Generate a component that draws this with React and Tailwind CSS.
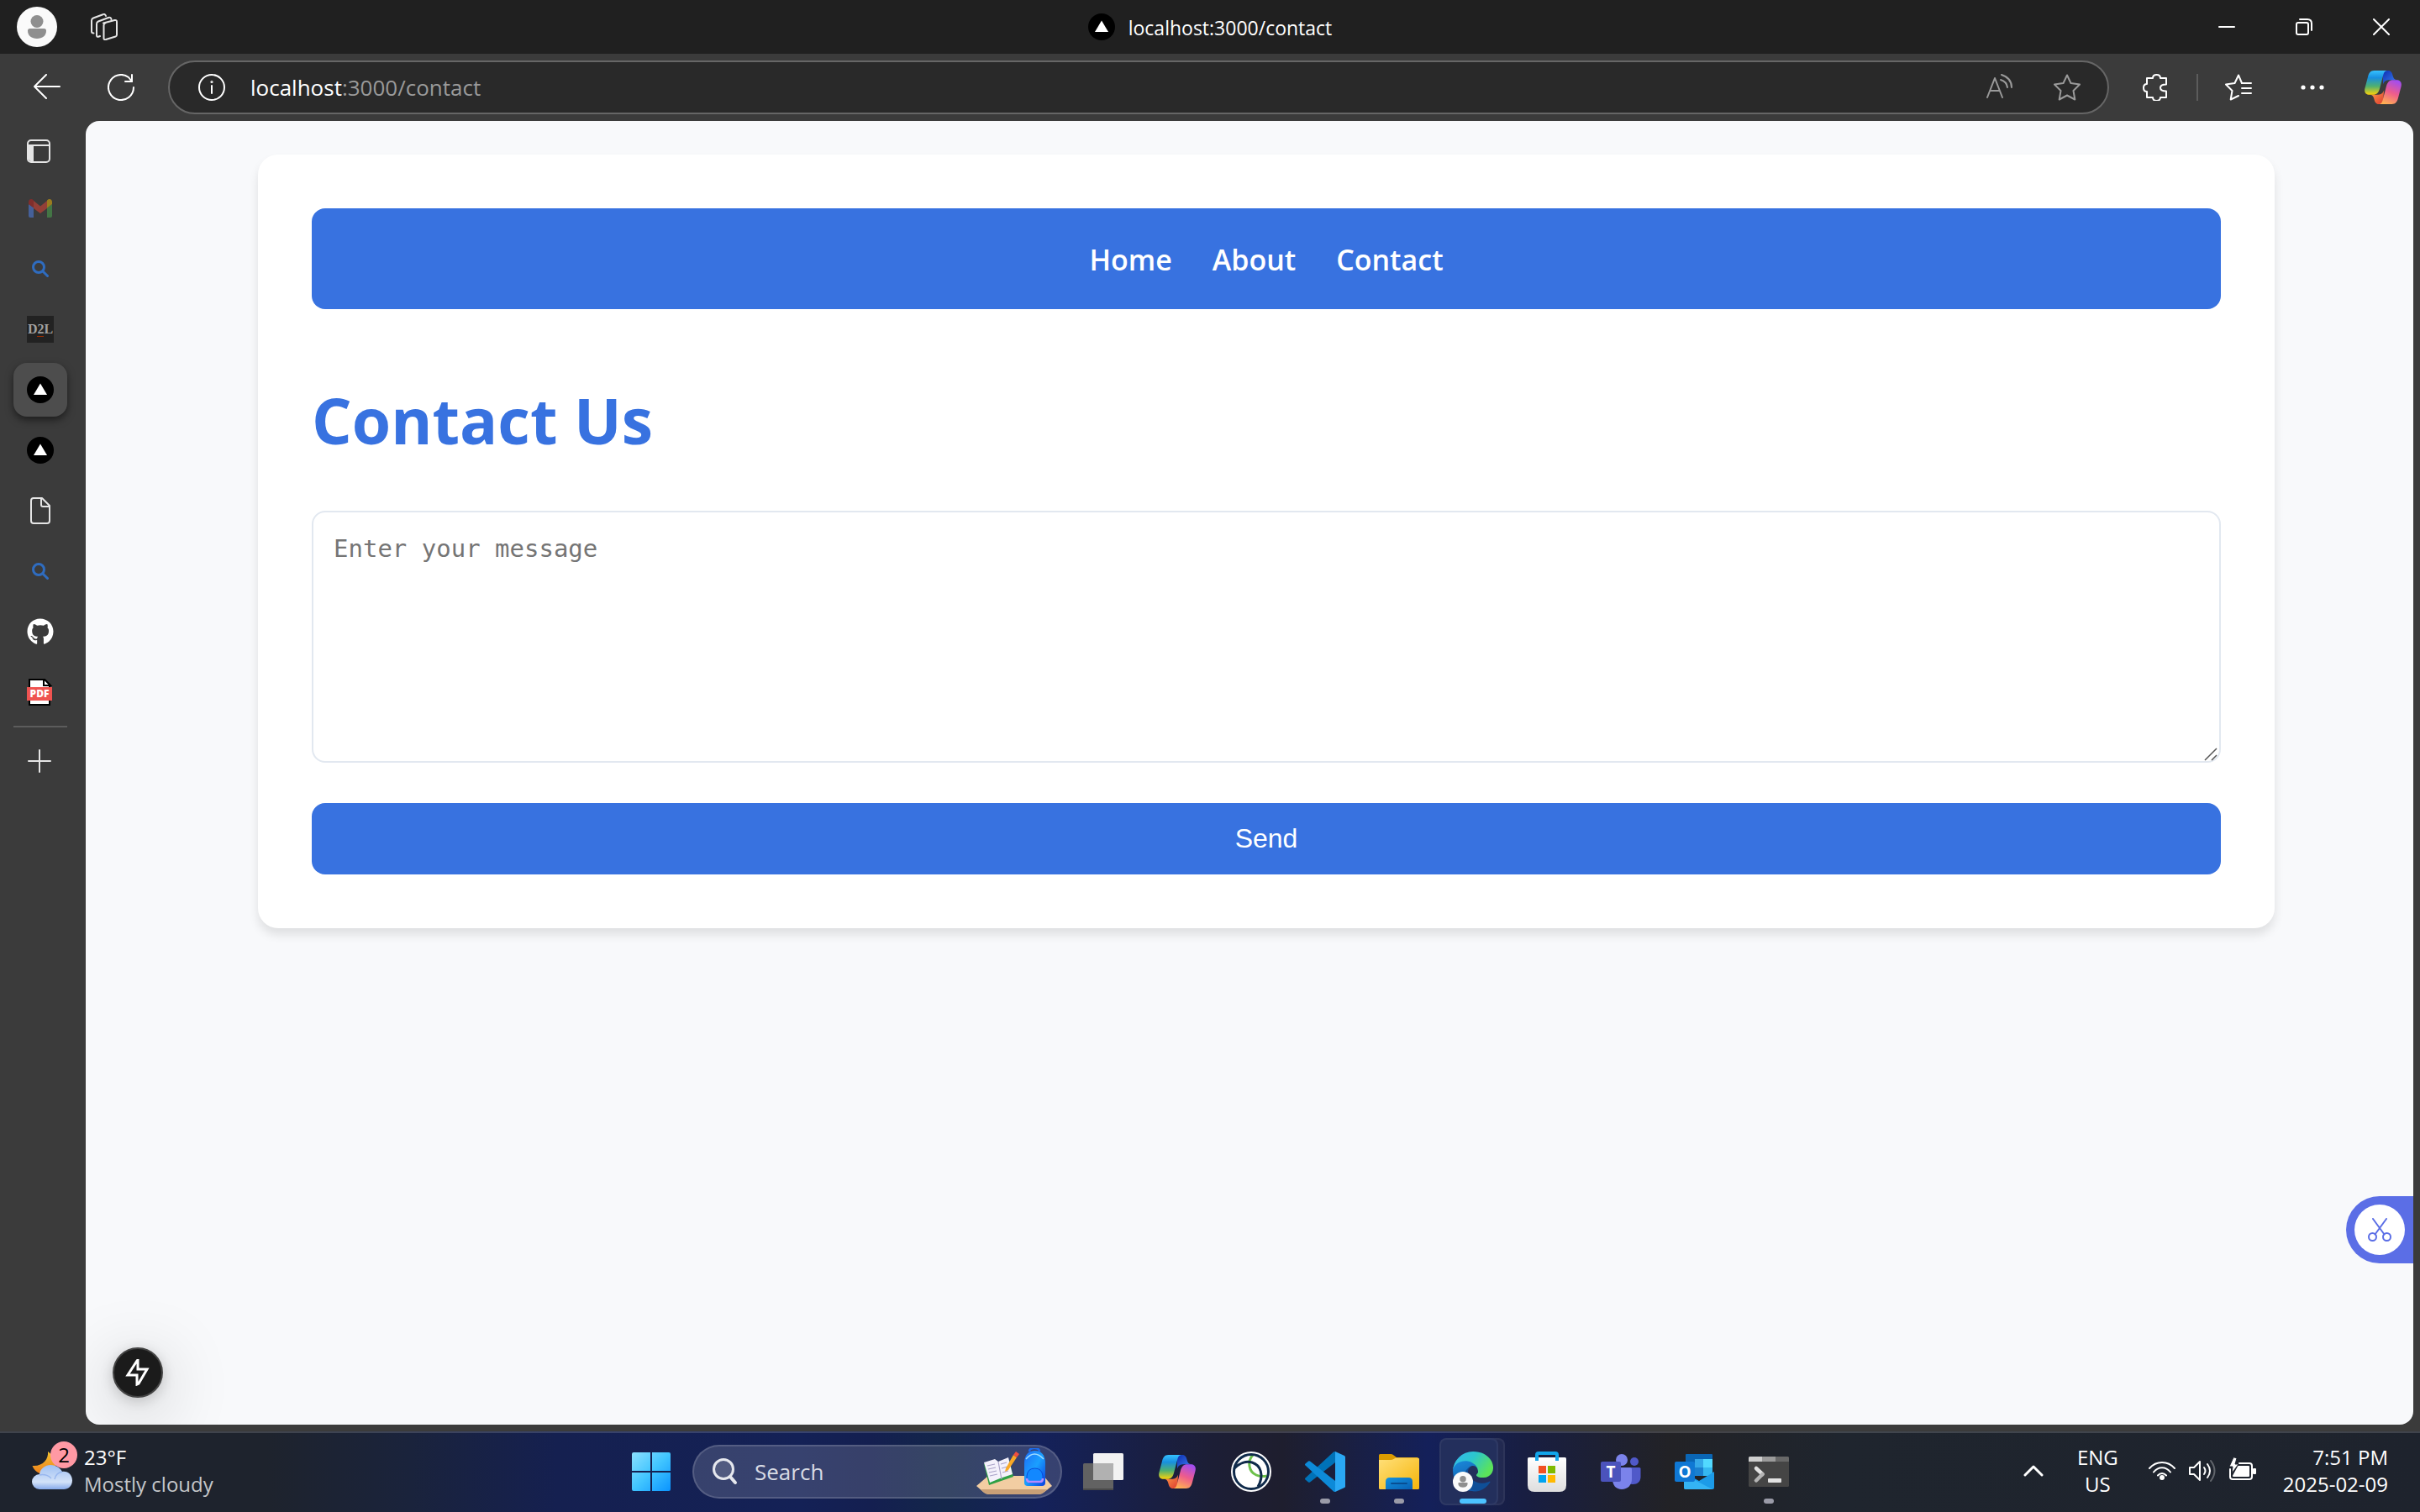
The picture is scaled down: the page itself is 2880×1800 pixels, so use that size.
import React from "react";
import { FaGithub } from "react-icons/fa";

/* ---------- title bar and toolbar icons ---------- */

function Line({ size = 32, w = 2, className = "", children }) {
  return (
    <svg
      width={size}
      height={size}
      viewBox={`0 0 ${size} ${size}`}
      fill="none"
      stroke="currentColor"
      strokeWidth={w}
      strokeLinecap="round"
      strokeLinejoin="round"
      aria-hidden="true"
      className={"shrink-0 " + className}
    >
      {children}
    </svg>
  );
}

const Profile = () => (
  <svg width="48" height="48" viewBox="0 0 48 48" aria-hidden="true">
    <circle cx="24" cy="24" r="24" fill="#fafafa" />
    <circle cx="24" cy="17.500" r="7.500" fill="#8f8f8f" />
    <path d="M15.500 26h17q2.500 0 2.500 2.500C35 34.500 30.500 38 24 38s-11-3.500-11-9.500q0-2.500 2.500-2.500z" fill="#8f8f8f" />
  </svg>
);

const Workspaces = () => (
  <Line className="text-neutral-200">
    <path d="M15 11.500 28.500 8Q31 7.500 31 10v15.500q0 1.500-1.500 2L18 31q-2.500.7-2.500-1.500V14q0-2 2-2.700" />
    <path d="M24.500 7Q24 4 21 5L9 9.500Q7 10.300 7 12.500V26q0 2 2 1.800l2-.8" />
    <path d="M18 3Q17 0 14.500 1.200L3 5.500Q1 6.300 1 8.500v13q0 2 2.500 2" />
  </Line>
);

function Triangle() {
  return (
    <svg width="32" height="32" viewBox="0 0 32 32" aria-hidden="true" className="shrink-0">
      <circle cx="16" cy="16" r="16" fill="#000" />
      <path d="M16 8.500 24 22H8z" fill="#fff" />
    </svg>
  );
}

function CopilotLogo({ id }) {
  return (
    <svg width="44" height="40" viewBox="0 0 44 40" aria-hidden="true" className="shrink-0">
      <defs>
        <linearGradient id={id + "a"} x1="0" y1="0" x2="0" y2="1">
          <stop offset="0" stopColor="#35c1ff" />
          <stop offset=".3" stopColor="#188fdf" />
          <stop offset=".65" stopColor="#4fb070" />
          <stop offset="1" stopColor="#fbd209" />
        </linearGradient>
        <linearGradient id={id + "b"} x1="0" y1="0" x2="1" y2="1">
          <stop offset="0" stopColor="#0f2fb0" />
          <stop offset="1" stopColor="#3b82f6" />
        </linearGradient>
        <linearGradient id={id + "c"} x1=".7" y1="0" x2=".3" y2="1">
          <stop offset="0" stopColor="#a24df0" />
          <stop offset=".5" stopColor="#ee5c8c" />
          <stop offset="1" stopColor="#ffb152" />
        </linearGradient>
        <linearGradient id={id + "d"} x1="0" y1="0" x2="1" y2="1">
          <stop offset="0" stopColor="#ffa34a" />
          <stop offset="1" stopColor="#dd3a30" />
        </linearGradient>
      </defs>
      <path d="M22 0h6c3.500 0 4.700 2.500 5.600 6 .8 3 2 5.200 5.400 5.200h-9c-4 0-6.500 1-8 5z" fill={`url(#${id}b)`} />
      <path d="M22 40h-5c-3.500 0-4.700-2.500-5.600-6-.8-3-2-5.200-5.400-5.200h9c4 0 6.500-1 8-5z" fill={`url(#${id}d)`} />
      <path d="M11.500 0H27c-2.700 0-4 2.300-4.800 5.500L18 21.500c-1.300 4.800-3.600 7.300-8 7.300H6c-4.500 0-6.800-3-5.500-8L4 7.500C5.200 2.700 7.200 0 11.500 0z" fill={`url(#${id}a)`} />
      <path d="M32.500 40H17c2.700 0 4-2.300 4.800-5.500L26 18.500c1.300-4.800 3.600-7.300 8-7.300h4c4.500 0 6.800 3 5.500 8L40 32.500c-1.200 4.800-3.200 7.500-7.500 7.500z" fill={`url(#${id}c)`} />
    </svg>
  );
}

/* ---------- vertical tab icons ---------- */

const TabActions = () => (
  <Line size={28} className="text-neutral-200">
    <path d="M2 8H8V26H5Q2 26 2 23z" fill="currentColor" stroke="none" />
    <rect x="1" y="1" width="26" height="26" rx="4" />
    <path d="M1 7h26" />
    <path d="M7 7v20" />
  </Line>
);

const Gmail = () => (
  <svg width="28" height="22" viewBox="0 0 28 22" aria-hidden="true" className="opacity-50">
    <path d="M0 6v14q0 2 2 2h4V10z" fill="#4f86f7" />
    <path d="M28 6v14q0 2-2 2h-4V10z" fill="#4caf50" />
    <path d="M6 2l8 6.500L22 2v9l-8 6-8-6z" fill="#ea4335" />
    <path d="M0 3.500C0 0 3.500-1 6 1.500v9L0 6z" fill="#c5221f" />
    <path d="M28 3.500C28 0 24.500-1 22 1.500v9L28 6z" fill="#fbbc04" />
  </svg>
);

const BlueSearch = () => (
  <Line size={20} w={3} className="text-[#2f6cbf]">
    <circle cx="8" cy="8" r="6.500" />
    <path d="M13 13l5.500 5.500" />
  </Line>
);

const D2L = () => (
  <span className="flex size-8 items-center justify-center bg-[#222] font-['Liberation_Serif',serif] text-base font-bold text-neutral-400">
    D<span className="border-b border-orange-800 leading-4">2</span>L
  </span>
);

const PageIcon = () => (
  <Line size={32} className="text-neutral-200">
    <path d="M7 1h11l9 9v18q0 3-3 3H8q-3 0-3-3V4q0-3 3-3" />
    <path d="M17 1v8q0 2 2 2h8" />
  </Line>
);

const Pdf = () => (
  <svg width="32" height="32" viewBox="0 0 32 32" aria-hidden="true">
    <path d="M3 1h18l6 6v24H3z" fill="#fff" stroke="#000" strokeWidth="2" />
    <path d="M20 0v8h8z" fill="#fff" stroke="#000" strokeWidth="2" />
    <path d="M0 10h30v16H0z" fill="#ef5350" />
    <text x="15" y="22" textAnchor="middle" fontSize="12" fontWeight="800" fill="#fff" fontFamily="Open Sans, sans-serif">
      PDF
    </text>
  </svg>
);

/* ---------- taskbar icons ---------- */

const Weather = () => (
  <svg width="48" height="46" viewBox="0 0 48 46" aria-hidden="true">
    <defs>
      <linearGradient id="moon" x1="0" y1="0" x2="0" y2="1">
        <stop offset="0" stopColor="#f2c230" />
        <stop offset="1" stopColor="#ee7d1a" />
      </linearGradient>
      <linearGradient id="cloud" x1="0" y1="0" x2="0" y2="1">
        <stop offset="0" stopColor="#9fc0f3" />
        <stop offset=".7" stopColor="#d3e2f8" />
        <stop offset="1" stopColor="#86a9ea" />
      </linearGradient>
    </defs>
    <path d="M19 0c1 9-6 18-18.500 17C3 24 12 30 22 26c7-3 8-14 4-20z" fill="url(#moon)" />
    <path d="M9 45a9 9 0 010-18c1-7 7-11 13-11 7 0 12 4 14 8 7-1 12 4 12 10.500S43 45 38 45z" fill="url(#cloud)" />
    <path d="M9 28c5-1 10 0 14 4M27 33c1-5 4-8 9-9" fill="none" stroke="#7ea3ea" strokeWidth="1.500" opacity=".6" />
  </svg>
);

const Windows = () => (
  <svg width="46" height="46" viewBox="0 0 46 46" aria-hidden="true">
    <defs>
      <linearGradient id="win" x1="0" y1="0" x2="1" y2="1">
        <stop offset="0" stopColor="#8be0ff" />
        <stop offset=".5" stopColor="#41c5ff" />
        <stop offset="1" stopColor="#0a94ff" />
      </linearGradient>
    </defs>
    <path d="M2 0h20v22H0V2q0-2 2-2zM24 0h20q2 0 2 2v20H24zM0 24h22v22H2q-2 0-2-2zM24 24h22v20q0 2-2 2H24z" fill="url(#win)" />
  </svg>
);

const SearchGlyph = () => (
  <svg width="30" height="32" viewBox="0 0 30 32" fill="none" aria-hidden="true" className="shrink-0">
    <circle cx="13" cy="13" r="11.500" stroke="#e6e8ee" strokeWidth="3" fill="#ffffff22" />
    <path d="M21 22l6 7" stroke="#e6e8ee" strokeWidth="4" strokeLinecap="round" />
  </svg>
);

const StudyArt = () => (
  <svg width="90" height="56" viewBox="0 0 90 56" aria-hidden="true" className="shrink-0">
    <defs>
      <linearGradient id="bag" x1="0" y1="0" x2="1" y2="1">
        <stop offset="0" stopColor="#1e6cf5" />
        <stop offset=".5" stopColor="#1aa0ff" />
        <stop offset="1" stopColor="#0a3fe0" />
      </linearGradient>
    </defs>
    <path d="M14 33h66l10 12-9 7q-3 3-8 3H16q-5 0-8-3l-8-7z" fill="#f2cda2" />
    <path d="M5 49h80l-4 3q-3 3-8 3H16q-5 0-8-3z" fill="#c9a077" />
    <path d="M9 19l30-5 5 20-29 10z" fill="#2fa045" />
    <path d="M9 17l13-4 4 3 12-5 5 20-12 4-3 1-12 5z" fill="#f4f1fb" />
    <path d="M26 16l4 21M13 21l9-2M14 25l9-2M15 29l9-2M16 33l9-2M29 19l7-2M30 24l7-2M31 29l7-2" stroke="#aaa3c8" strokeWidth="1.200" fill="none" />
    <path d="M35 24l-1 4 4-2L48 11l-4-3z" fill="#f9a825" />
    <path d="M44 8l3-4 4 3-3 4z" fill="#f04f3e" />
    <path d="M63 4q0-4 6-4t6 4" stroke="#1a6cf0" strokeWidth="2.500" fill="none" />
    <path d="M57 18C57 8 62 3 69.500 3S82 8 82 18v23q0 4-4 4H61q-4 0-4-4z" fill="url(#bag)" />
    <path d="M59 13q10-12 21 0" stroke="#9fdcff" strokeWidth="1.500" fill="none" />
    <path d="M60 33q1-9 9.500-9T79 33v5q0 3-3 3H63q-3 0-3-3z" fill="#1288ff" stroke="#0a49d8" strokeWidth="1" />
    <path d="M60 36q0 4 3 4h13q3 0 3-4" stroke="#b58bff" strokeWidth="2.500" fill="none" />
  </svg>
);

const TaskView = () => (
  <svg width="48" height="44" viewBox="0 0 48 44" aria-hidden="true">
    <rect x="12" y="0" width="36" height="32" rx="1.500" fill="#f2f2f2" />
    <rect x="0" y="12" width="36" height="32" rx="1.500" fill="#626262" />
    <path d="M12 12h24v20H12z" fill="#b1b1b1" />
    <path d="M0 42h36v1q0 1-1 1H1q-1 0-1-1z" fill="#4a4a4a" />
  </svg>
);

const Anaconda = () => (
  <svg width="48" height="48" viewBox="0 0 48 48" fill="none" aria-hidden="true">
    <circle cx="24" cy="24" r="24" fill="#fff" />
    <path d="M26 4C19 12 21 24 30 28c4 2 8 2 13 1" stroke="#6cc04a" strokeWidth="3" />
    <circle cx="24" cy="24" r="20.500" stroke="#0f2a4a" strokeWidth="3" />
    <path d="M4 20C10 14 18 11 25 13c10 3 15 15 7 29" stroke="#0f2a4a" strokeWidth="3" />
  </svg>
);

const VsCode = () => (
  <svg width="48" height="48" viewBox="0 0 48 48" aria-hidden="true">
    <path d="M34 .5Q35 0 36 0v13L6 36.500q-1 .5-2 0l-3.500-3q-1-1 0-2z" fill="#0072b8" />
    <path d="M34 47.500q1 .5 2 .5V35L6 11.500q-1-.5-2 0l-3.500 3q-1 1 0 2z" fill="#0d8ad8" />
    <path d="M36 0l11 5q1 .5 1 1.500v35q0 1-1 1.500l-11 5z" fill="#2aa8f4" />
  </svg>
);

const Folder = () => (
  <svg width="48" height="42" viewBox="0 0 48 42" aria-hidden="true">
    <defs>
      <linearGradient id="fold" x1="0" y1="0" x2="1" y2="1">
        <stop offset="0" stopColor="#ffe07a" />
        <stop offset="1" stopColor="#f6b50a" />
      </linearGradient>
      <linearGradient id="foldb" x1="0" y1="0" x2="1" y2="1">
        <stop offset="0" stopColor="#1493de" />
        <stop offset="1" stopColor="#0860b4" />
      </linearGradient>
    </defs>
    <path d="M0 1.500Q0 0 1.500 0H14q2 0 3 1l4 3h25v8H0z" fill="#dc9c00" />
    <path d="M0 7h14q2 0 3.500-1L20 4.500h26.500q1.500 0 1.500 1.500v34.500q0 1.500-1.500 1.500h-45Q0 42 0 40.500z" fill="url(#fold)" />
    <path d="M8 42v-9q0-5 5-5h22q5 0 5 5v9z" fill="url(#foldb)" />
    <path d="M15 35h18" stroke="#084e92" strokeWidth="2" strokeLinecap="round" />
  </svg>
);

const Edge = () => (
  <svg width="48" height="48" viewBox="0 0 256 256" aria-hidden="true">
    <defs>
      <linearGradient id="ea" x1="0" y1="0" x2="1" y2=".5">
        <stop offset="0" stopColor="#35b8f1" />
        <stop offset=".5" stopColor="#2cc7cd" />
        <stop offset="1" stopColor="#5be35a" />
      </linearGradient>
      <linearGradient id="eb" x1="0" y1="0" x2=".3" y2="1">
        <stop offset="0" stopColor="#1b8ee0" />
        <stop offset="1" stopColor="#1059a8" />
      </linearGradient>
    </defs>
    <path d="M231 190.500c-3.400 1.800-6.900 3.400-10.500 4.700a101 101 0 0 1-35.900 6.400c-47.300 0-88.500-32.500-88.500-74.300a31.500 31.500 0 0 1 16.400-27.300c-42.800 1.800-53.800 46.400-53.800 72.500 0 74 68.100 81.400 82.800 81.400 7.900 0 19.800-2.300 27-4.600l1.300-.4a128 128 0 0 0 66.600-52.800 4 4 0 0 0-5.400-5.600z" fill="#0f4f98" />
    <path d="M105.700 236.500a79.200 79.200 0 0 1-22.700-21.300 80.700 80.700 0 0 1 29.500-120c3.200-1.500 8.500-4.100 15.600-4a32.400 32.400 0 0 1 25.700 13 32 32 0 0 1 6.300 18.700c0-.2 24.500-79.600-80-79.600-43.900 0-80 41.600-80 78.200a130 130 0 0 0 12.100 56 128 128 0 0 0 156.400 67 75.500 75.500 0 0 1-62.800-8z" fill="url(#eb)" />
    <path d="M152.300 144c-.8 1-3.300 2.500-3.300 5.600 0 2.700 1.700 5.200 4.800 7.300 14.400 10 41.500 8.700 41.600 8.700a59.600 59.600 0 0 0 30.300-8.400 61.400 61.400 0 0 0 30.400-52.900c.3-22.300-8-37.200-11.300-43.800C223.600 20.200 177.900 0 128 0A128 128 0 0 0 0 126.200c.5-36.500 36.800-66 80-66 3.500 0 23.500.3 42 10a72.600 72.600 0 0 1 30.900 29.300c6.100 10.600 7.200 24.100 7.200 29.500 0 5.300-2.700 8.300-7.800 15z" fill="url(#ea)" />
    <circle cx="64" cy="192" r="64" fill="#fafafa" />
    <circle cx="64" cy="174" r="20" fill="#8f8f8f" />
    <path d="M40 197h48q6 0 6 6c0 16-12 25-30 25s-30-9-30-25q0-6 6-6z" fill="#8f8f8f" />
  </svg>
);

const Store = () => (
  <svg width="46" height="48" viewBox="0 0 46 48" aria-hidden="true">
    <defs>
      <linearGradient id="st" x1="0" y1="0" x2="0" y2="1">
        <stop offset="0" stopColor="#ffffff" />
        <stop offset="1" stopColor="#dedede" />
      </linearGradient>
    </defs>
    <path d="M1.500 7h43Q46 7 46 8.500V40q0 8-8 8H8q-8 0-8-8V8.500Q0 7 1.500 7z" fill="url(#st)" />
    <path d="M11 11V4q0-2 2-2h20q2 0 2 2v7" fill="none" stroke="#12a5ea" strokeWidth="4" />
    <path d="M13 17h9v9h-9z" fill="#f25022" />
    <path d="M24 17h9v9h-9z" fill="#7fba00" />
    <path d="M13 28h9v9h-9z" fill="#00a4ef" />
    <path d="M24 28h9v9h-9z" fill="#ffb900" />
  </svg>
);

const Teams = () => (
  <svg width="48" height="42" viewBox="0 0 48 42" aria-hidden="true">
    <circle cx="40" cy="9" r="5" fill="#5059c9" />
    <path d="M35 16h11q1.500 0 1.500 1.500V27c0 6-4 9-9 9-2 0-3.500-.5-3.500-.5z" fill="#5059c9" />
    <circle cx="25" cy="7" r="7" fill="#7b83eb" />
    <path d="M14 16h21q2 0 2 2v12c0 7-5 12-12 12s-11-5-11-12z" fill="#7b83eb" />
    <rect x="0" y="9" width="24" height="24" rx="2" fill="#4b53bc" />
    <text x="12" y="28" textAnchor="middle" fontSize="19" fontWeight="700" fill="#fff" fontFamily="Open Sans, sans-serif">
      T
    </text>
  </svg>
);

const Outlook = () => (
  <svg width="48" height="42" viewBox="0 0 48 42" aria-hidden="true">
    <path d="M14 0h30q1 0 1 1v24H13V1q0-1 1-1z" fill="#0a66b5" />
    <path d="M24 6h10v10H24z" fill="#35a7e8" />
    <path d="M34 6h11v10H34z" fill="#52d9ff" />
    <path d="M24 16h10v10H24z" fill="#1a80d0" />
    <path d="M34 16h11v10H34z" fill="#35b8f1" />
    <path d="M47 21v19q0 2-2 2H13q-2 0-2-2V22l18 10z" fill="#1c9be8" />
    <path d="M11 24l34 18H13q-2 0-2-2z" fill="#34b4f4" />
    <rect x="0" y="9" width="24" height="24" rx="2" fill="#0f78d4" />
    <text x="12" y="28" textAnchor="middle" fontSize="19" fontWeight="700" fill="#fff" fontFamily="Open Sans, sans-serif">
      O
    </text>
  </svg>
);

const Terminal = () => (
  <svg width="48" height="36" viewBox="0 0 48 36" aria-hidden="true">
    <rect width="48" height="36" rx="1.500" fill="#454545" />
    <path d="M0 6V1.500Q0 0 1.500 0H16v6z" fill="#cfcfcf" />
    <path d="M16 0h16v6H16z" fill="#9b9b9b" />
    <path d="M32 0h14.500Q48 0 48 1.500V6H32z" fill="#686868" />
    <path d="M9 14l7.500 7" stroke="#e2e2e2" strokeWidth="4.500" strokeLinecap="round" />
    <path d="M16.500 21L9 28.500" stroke="#b4b4b4" strokeWidth="4.500" strokeLinecap="round" />
    <rect x="23" y="26" width="16" height="5" rx="1" fill="#e2e2e2" />
  </svg>
);

const Wifi = () => (
  <Line size={32} w={2}>
    <path d="M1 13C9 3.500 23 3.500 31 13M6 17.500c5.500-7 14.500-7 20 0M11 21.500c3-3.500 7-3.500 10 0" />
    <circle cx="16" cy="24" r="2" fill="currentColor" />
  </Line>
);

const Volume = () => (
  <Line size={32} w={2}>
    <path d="M1 12h5l7-7v22l-7-7H1z" />
    <path d="M18 12q3 4 0 8M22 8q6 8 0 16" />
    <path d="M26 4q9 12 0 24" opacity=".3" />
  </Line>
);

const Battery = () => (
  <Line size={32} w={2}>
    <path d="M1 14v9q0 3 3 3h20q3 0 3-3V10q0-3-3-3H12" />
    <path d="M11 11h12v11H5z" fill="currentColor" />
    <path d="M5 0L0 11h4l-1 8 8-11H7l2-7z" fill="currentColor" stroke="#1e232d" strokeWidth="1" />
    <path d="M29 14h2v5h-2z" fill="currentColor" />
  </Line>
);

/* ---------- page parts ---------- */

const TABS = [
  { label: "Gmail", icon: <Gmail /> },
  { label: "Search results", icon: <BlueSearch /> },
  { label: "D2L", icon: <D2L /> },
  { label: "localhost contact", icon: <Triangle />, active: true },
  { label: "localhost", icon: <Triangle /> },
  { label: "Document", icon: <PageIcon /> },
  { label: "Search", icon: <BlueSearch /> },
  { label: "GitHub", icon: <FaGithub className="size-8 text-white" /> },
  { label: "PDF", icon: <Pdf /> },
];

const APPS = [
  { label: "Task view", icon: <TaskView /> },
  { label: "Copilot", icon: <CopilotLogo id="cpt" /> },
  { label: "Anaconda", icon: <Anaconda /> },
  { label: "Visual Studio Code", icon: <VsCode />, open: true },
  { label: "File Explorer", icon: <Folder />, open: true },
  { label: "Microsoft Edge", icon: <Edge />, current: true },
  { label: "Microsoft Store", icon: <Store /> },
  { label: "Teams", icon: <Teams /> },
  { label: "Outlook", icon: <Outlook /> },
  { label: "Terminal", icon: <Terminal />, open: true },
];

function TitleBar() {
  return (
    <header className="grid h-16 grid-cols-[1fr_auto_1fr] items-center bg-[#202020] text-white">
      <div className="flex items-center gap-10 pl-5">
        <button aria-label="Profile"><Profile /></button>
        <button aria-label="Workspaces"><Workspaces /></button>
      </div>
      <div className="flex items-center gap-4 text-[23px]">
        <Triangle />
        <span className="pt-0.5">localhost:3000/contact</span>
      </div>
      <div className="flex h-full justify-end">
        <button aria-label="Minimize" className="flex w-[92px] items-center justify-center">
          <Line size={20}><path d="M1 10h18" /></Line>
        </button>
        <button aria-label="Restore" className="flex w-[92px] items-center justify-center">
          <Line size={20}>
            <rect x="1" y="5" width="14" height="14" rx="2" />
            <path d="M5 1h9q5 0 5 5v8" />
          </Line>
        </button>
        <button aria-label="Close" className="flex w-[92px] items-center justify-center">
          <Line size={20}><path d="M1 1l18 18M19 1L1 19" /></Line>
        </button>
      </div>
    </header>
  );
}

function Toolbar() {
  return (
    <div className="flex h-20 items-center pl-10 pr-[22px] text-white">
      <button aria-label="Back" className="mr-14">
        <Line><path d="M31 15H1M15 1L1 15l14 14" /></Line>
      </button>
      <button aria-label="Refresh" className="mr-10">
        <Line>
          <path d="M31 16A15 15 0 1 1 25 4l4 5" />
          <path d="M29 1v8h-8" />
        </Line>
      </button>
      <div className="flex h-16 flex-1 items-center rounded-full border-2 border-[#666] bg-[#292929] pl-[34px] pr-8">
        <button aria-label="Site information">
          <Line>
            <circle cx="16" cy="16" r="15" />
            <path d="M16 14v9" />
            <circle cx="16" cy="9.500" r=".6" />
          </Line>
        </button>
        <a href="#address" className="ml-[30px] flex-1 text-[26px] text-[#9a9a9a]">
          <span className="text-white">localhost</span>:3000/contact
        </a>
        <div className="flex items-center gap-12 text-[#9a9a9a]">
          <button aria-label="Read aloud">
            <Line>
              <path d="M1 28L10 5l9 23M4.500 20h11" />
              <path d="M18 1q12 4 12 15M17 7q7 2 8 9" />
            </Line>
          </button>
          <button aria-label="Add to favorites">
            <Line><path d="M16 1.500l4.500 9.500 10.500 1.500-7.500 7.500 1.800 10.500L16 25.500 6.700 30.500 8.500 20 1 12.500 11.500 11z" /></Line>
          </button>
        </div>
      </div>
      <button aria-label="Extensions" className="ml-10 mr-8">
        <Line>
          <path d="M5 5h7q0-4 4.500-4T21 5h7v7.500q-7 0-7 4t7 4V28h-7q0 4-4.500 4T12 28H5v-7q-4 0-4-4.500T5 12z" />
        </Line>
      </button>
      <div className="h-8 w-0.5 bg-[#5c5c5c]" />
      <button aria-label="Favorites" className="ml-8 mr-14">
        <Line>
          <path d="M20 11l-4-9.500L11.500 11 1 12.500 8.500 20 6.700 30.500 16 26" />
          <path d="M20 11h11M20 17h11M20 23h11" />
        </Line>
      </button>
      <button aria-label="Settings and more" className="mr-[46px]">
        <svg width="32" height="32" viewBox="0 0 32 32" fill="currentColor" aria-hidden="true">
          <circle cx="5" cy="16" r="2.600" />
          <circle cx="16" cy="16" r="2.600" />
          <circle cx="27" cy="16" r="2.600" />
        </svg>
      </button>
      <button aria-label="Copilot"><CopilotLogo id="cpb" /></button>
    </div>
  );
}

function Sidebar() {
  return (
    <aside className="flex w-[102px] shrink-0 flex-col px-4 text-neutral-200">
      <button aria-label="Tab actions menu" className="flex h-[68px] w-[60px] items-center justify-center pt-1">
        <TabActions />
      </button>
      {TABS.map((t, i) => (
        <button
          key={i}
          aria-label={t.label}
          className={
            t.active
              ? "my-1 flex size-16 items-center justify-center rounded-2xl bg-[#4d4d4d] shadow-[0_4px_10px_rgba(0,0,0,0.5)]"
              : "flex h-[72px] w-16 items-center justify-center"
          }
        >
          {t.icon}
        </button>
      ))}
      <div className="mt-1 h-0.5 w-16 bg-[#5c5c5c]" />
      <button aria-label="New tab" className="flex h-20 w-[62px] items-center justify-center">
        <Line size={28}><path d="M14 1v26M1 14h26" /></Line>
      </button>
    </aside>
  );
}

function ContactCard() {
  return (
    <section className="w-full max-w-[2400px] self-start rounded-3xl bg-white p-16 shadow-[0_8px_12px_rgba(0,0,0,0.1)]">
      <nav className="flex h-[120px] items-center justify-center gap-12 rounded-2xl bg-[#3872e0] pt-0.5 text-[34px] font-semibold text-white">
        <a href="#home">Home</a>
        <a href="#about">About</a>
        <a href="#contact">Contact</a>
      </nav>
      <h1 className="mb-12 mt-[72px] text-[75px] font-bold leading-[120px] text-[#3872e0]">Contact Us</h1>
      <form onSubmit={(e) => e.preventDefault()} className="flex flex-col gap-12">
        <div className="relative">
          <textarea
            aria-label="Message"
            placeholder="Enter your message"
            className="block h-[300px] w-full resize-none rounded-2xl border-2 border-slate-200 bg-white p-6 font-['DejaVu_Sans_Mono',monospace] text-[29px] leading-[38px] text-neutral-800 placeholder:text-[#757575]"
          />
          <svg width="18" height="18" viewBox="0 0 18 18" aria-hidden="true" className="pointer-events-none absolute bottom-0.5 right-0.5">
            <path d="M1 17L15 3M9 17l6-6" stroke="#555" strokeWidth="1.500" />
          </svg>
        </div>
        <button type="submit" className="rounded-2xl bg-[#3872e0] py-6 font-['Liberation_Sans',sans-serif] text-[32px] leading-[37px] text-white">
          Send
        </button>
      </form>
    </section>
  );
}

function PageView() {
  return (
    <main className="relative mb-2 mr-2 flex flex-1 justify-center overflow-hidden rounded-2xl bg-[#f8f9fb] pl-10 pt-10">
      <ContactCard />
      <button
        aria-label="Developer tools"
        className="absolute bottom-8 left-8 flex size-[60px] items-center justify-center rounded-full border-2 border-[#444] bg-[#1b1b1b] text-white shadow-[0_4px_16px_rgba(0,0,0,0.18),0_16px_80px_rgba(0,0,0,0.25)]"
      >
        <Line size={32} w={3}>
          <path d="M15 2L4 19h11v11l2-1 10-17H16V1z" strokeLinejoin="miter" />
        </Line>
      </button>
      <button
        aria-label="Screen capture"
        className="absolute bottom-48 right-0 flex h-20 w-20 items-center rounded-l-full bg-[#5b6ee6] pl-2.5"
      >
        <span className="flex size-[60px] items-center justify-center rounded-full bg-white text-[#5b6ee6]">
          <Line size={28}>
            <circle cx="5.500" cy="22.500" r="4.500" />
            <circle cx="22.500" cy="22.500" r="4.500" />
            <path d="M8.500 19.500L22 1M19.500 19.500L6 1" />
          </Line>
        </span>
      </button>
    </main>
  );
}

function AppButton({ app }) {
  return (
    <button aria-label={app.label} className="relative flex h-full w-[88px] items-center justify-center">
      {app.current && (
        <>
          <span className="absolute left-14 top-1.5 h-20 w-[26px] rounded-lg border-2 border-white/5 bg-white/5" />
          <span className="absolute left-1 top-1.5 h-20 w-[70px] rounded-lg border-2 border-white/5 bg-[#232f5c]" />
        </>
      )}
      <span className="relative">{app.icon}</span>
      {app.open && <span className="absolute bottom-2 h-1.5 w-3 rounded-full bg-[#9a9ba8]" />}
      {app.current && <span className="absolute bottom-2 h-1.5 w-8 rounded-full bg-[#4cc2ff]" />}
    </button>
  );
}

function Taskbar() {
  return (
    <footer className="grid h-24 grid-cols-[1fr_auto_1fr] items-center border-t-2 border-white/15 bg-[linear-gradient(90deg,#1e232d_0%,#1e232d_11%,#1a233c_17%,#152050_23%,#142156_33%,#141f50_36%,#13264a_39%,#14215a_43%,#1c1e36_50%,#1e1e2e_53%,#1b1f3c_55%,#14205a_59%,#181e42_63%,#222226_69%,#1f252e_76%,#1e232d_100%)] bg-origin-border pb-0.5 text-[24px] leading-8 text-white">
      <button className="flex items-center pb-0.5 pl-[38px] text-left">
        <span className="relative mr-[14px]">
          <Weather />
          <span className="absolute -right-1.5 -top-3 flex size-8 items-center justify-center rounded-full bg-[#ff99a4] text-black">2</span>
        </span>
        <span>
          <span className="block">23°F</span>
          <span className="block text-[#c5c7ca]">Mostly cloudy</span>
        </span>
      </button>
      <div className="flex h-full items-center">
        <button aria-label="Start" className="flex h-full w-[88px] items-center justify-center"><Windows /></button>
        <button className="mx-[5px] flex h-16 w-[440px] items-center rounded-full border-2 border-white/15 bg-white/15 pl-[22px] pr-2.5 text-[26px] text-[#d8dbe4]">
          <SearchGlyph />
          <span className="ml-5 flex-1 text-left">Search</span>
          <StudyArt />
        </button>
        {APPS.map((a) => (
          <AppButton key={a.label} app={a} />
        ))}
      </div>
      <div className="flex items-center justify-end pb-0.5 pr-[38px]">
        <button aria-label="Show hidden icons" className="mr-10">
          <Line size={24} w={3}><path d="M2 17L12 7l10 10" /></Line>
        </button>
        <button className="mr-9 text-center">
          <span className="block">ENG</span>
          <span className="block">US</span>
        </button>
        <button aria-label="Network, volume and battery" className="mr-8 flex items-center gap-4">
          <Wifi />
          <Volume />
          <Battery />
        </button>
        <button className="text-right">
          <span className="block">7:51 PM</span>
          <span className="block">2025-02-09</span>
        </button>
      </div>
    </footer>
  );
}

export default function App() {
  return (
    <div className="flex min-h-screen flex-col bg-[#3b3b3b] font-['Open_Sans',sans-serif]">
      <TitleBar />
      <Toolbar />
      <div className="flex flex-1">
        <Sidebar />
        <PageView />
      </div>
      <Taskbar />
    </div>
  );
}
